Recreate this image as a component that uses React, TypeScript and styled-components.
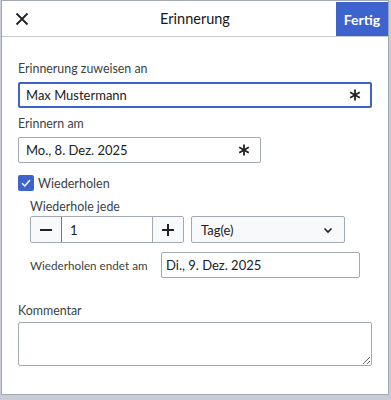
import styled, { createGlobalStyle } from 'styled-components'

const GlobalStyle = createGlobalStyle`
  html, body {
    margin: 0;
    padding: 0;
    background: #c8ccd6;
  }
  body {
    font-family: Lato, "Noto Sans", sans-serif;
    color: #202122;
  }
  * {
    box-sizing: border-box;
  }
`

const Dialog = styled.div`
  width: 388px;
  height: 395px;
  margin-left: 1px;
  background: #fff;
  border: 1px solid #a2a9b1;
  box-shadow: 0 2px 0 #a7abb5;
  display: flex;
  flex-direction: column;
`

const Header = styled.div`
  height: 36px;
  display: flex;
  align-items: stretch;
  border-bottom: 1px solid #c8ccd1;
`

const CloseButton = styled.button`
  width: 38px;
  border: none;
  background: transparent;
  display: flex;
  align-items: center;
  justify-content: center;
  padding: 0 0 0 2px;
  cursor: pointer;
`

const Title = styled.div`
  flex: 1;
  display: flex;
  align-items: center;
  justify-content: center;
  font-size: 14.5px;
  font-weight: 400;
  color: #161718;
  padding-left: 14px;
`

const DoneButton = styled.button`
  width: 52px;
  margin-top: 1px;
  border: none;
  background: #3e63cc;
  color: #fff;
  font-family: Lato, "Noto Sans", sans-serif;
  font-size: 14px;
  font-weight: 700;
  cursor: pointer;
`

const Body = styled.div`
  padding: 23px 16px 0 16px;
  display: flex;
  flex-direction: column;
`

const Label = styled.div<{ $gap?: number }>`
  font-size: 12.4px;
  line-height: 18px;
  color: #3c3f42;
  margin-bottom: ${p => p.$gap ?? 4}px;
`

const Field = styled.div<{ $top?: number }>`
  display: flex;
  flex-direction: column;
  margin-top: ${p => p.$top ?? 0}px;
`

const InputBox = styled.div<{ $width?: number; $focus?: boolean; $left?: number }>`
  width: ${p => (p.$width ? `${p.$width}px` : '100%')};
  height: 26px;
  flex-shrink: 0;
  border: ${p => (p.$focus ? '2px solid #3e63cc' : '1px solid #a2a9b1')};
  padding: 0 ${p => (p.$focus ? 9 : 10)}px 0 ${p => p.$left ?? (p.$focus ? 6 : 7)}px;
  display: flex;
  align-items: center;
  justify-content: space-between;
  font-size: 13px;
  color: #202122;
  background: #fff;
  border-radius: 2px;
`

const CheckRow = styled.label`
  display: flex;
  align-items: center;
  gap: 4px;
  margin-top: 12px;
  font-size: 12.6px;
  color: #3c3f42;
`

const CheckBox = styled.span`
  width: 16px;
  height: 16px;
  border-radius: 2px;
  background: #3e63cc;
  display: flex;
  align-items: center;
  justify-content: center;
`

const Indent = styled.div`
  padding-left: 12px;
  display: flex;
  flex-direction: column;
  margin-top: 7px;
`

const RepeatRow = styled.div`
  display: flex;
  gap: 7px;
`

const Stepper = styled.div`
  width: 154px;
  height: 27px;
  display: flex;
  border: 1px solid #a2a9b1;
  border-radius: 2px;
`

const StepButton = styled.button`
  width: 30px;
  border: none;
  background: #f8f9fa;
  display: flex;
  align-items: center;
  justify-content: center;
  padding: 0;
`

const StepValue = styled.div`
  flex: 1;
  border-left: 1px solid #72777d;
  border-right: 1px solid #a2a9b1;
  display: flex;
  align-items: center;
  padding-left: 8px;
  font-size: 13px;
`

const Select = styled.div`
  width: 154px;
  height: 27px;
  border: 1px solid #a2a9b1;
  border-radius: 2px;
  background: #f8f9fa;
  display: flex;
  align-items: center;
  justify-content: space-between;
  padding: 0 11px 0 9px;
  font-size: 13px;
`

const EndRow = styled.div`
  display: flex;
  align-items: center;
  margin-top: 9px;
  font-size: 11.7px;
  color: #3c3f42;
  white-space: nowrap;
`

const EndLabel = styled.span`
  width: 131px;
  flex-shrink: 0;
`

const Comment = styled.textarea`
  width: 100%;
  height: 44px;
  border: 1px solid #a2a9b1;
  border-radius: 2px;
  resize: vertical;
  font-family: inherit;
  font-size: 13px;
`

const Asterisk = () => (
  <svg width="12" height="12" viewBox="0 0 12 12">
    <g stroke="#202122" strokeWidth="1.8" strokeLinecap="butt">
      <line x1="6" y1="0.5" x2="6" y2="11.5" />
      <line x1="1.2" y1="3.2" x2="10.8" y2="8.8" />
      <line x1="1.2" y1="8.8" x2="10.8" y2="3.2" />
    </g>
  </svg>
)

const App = () => {
  return (
    <>
      <GlobalStyle />
      <Dialog>
        <Header>
          <CloseButton aria-label="Schließen">
            <svg width="14" height="14" viewBox="0 0 14 14">
              <path d="M1.5 1.5 L12.5 12.5 M12.5 1.5 L1.5 12.5" stroke="#202122" strokeWidth="1.8" />
            </svg>
          </CloseButton>
          <Title>Erinnerung</Title>
          <DoneButton>Fertig</DoneButton>
        </Header>
        <Body>
          <Field>
            <Label>Erinnerung zuweisen an</Label>
            <InputBox $focus>
              <span>Max Mustermann</span>
              <Asterisk />
            </InputBox>
          </Field>
          <Field $top={7}>
            <Label>Erinnern am</Label>
            <InputBox $width={243}>
              <span>Mo., 8. Dez. 2025</span>
              <Asterisk />
            </InputBox>
          </Field>
          <CheckRow>
            <CheckBox>
              <svg width="12" height="12" viewBox="0 0 12 12">
                <path d="M2 6.3 L4.8 9 L10 3" stroke="#fff" strokeWidth="1.4" fill="none" />
              </svg>
            </CheckBox>
            Wiederholen
          </CheckRow>
          <Indent>
            <Label $gap={0}>Wiederhole jede</Label>
            <RepeatRow>
              <Stepper>
                <StepButton aria-label="Weniger">
                  <svg width="12" height="12" viewBox="0 0 12 12">
                    <path d="M0 6 H12" stroke="#202122" strokeWidth="2" />
                  </svg>
                </StepButton>
                <StepValue>1</StepValue>
                <StepButton aria-label="Mehr">
                  <svg width="12" height="12" viewBox="0 0 12 12">
                    <path d="M0 6 H12 M6 0 V12" stroke="#202122" strokeWidth="2" />
                  </svg>
                </StepButton>
              </Stepper>
              <Select>
                <span>Tag(e)</span>
                <svg width="10" height="10" viewBox="0 0 10 10">
                  <path d="M1.5 3.5 L5 7 L8.5 3.5" stroke="#202122" strokeWidth="1.6" fill="none" />
                </svg>
              </Select>
            </RepeatRow>
            <EndRow>
              <EndLabel>Wiederholen endet am</EndLabel>
              <InputBox $width={199} $left={4}>
                <span>Di., 9. Dez. 2025</span>
              </InputBox>
            </EndRow>
          </Indent>
          <Field $top={24}>
            <Label $gap={2}>Kommentar</Label>
            <Comment />
          </Field>
        </Body>
      </Dialog>
    </>
  )
}

export default App
